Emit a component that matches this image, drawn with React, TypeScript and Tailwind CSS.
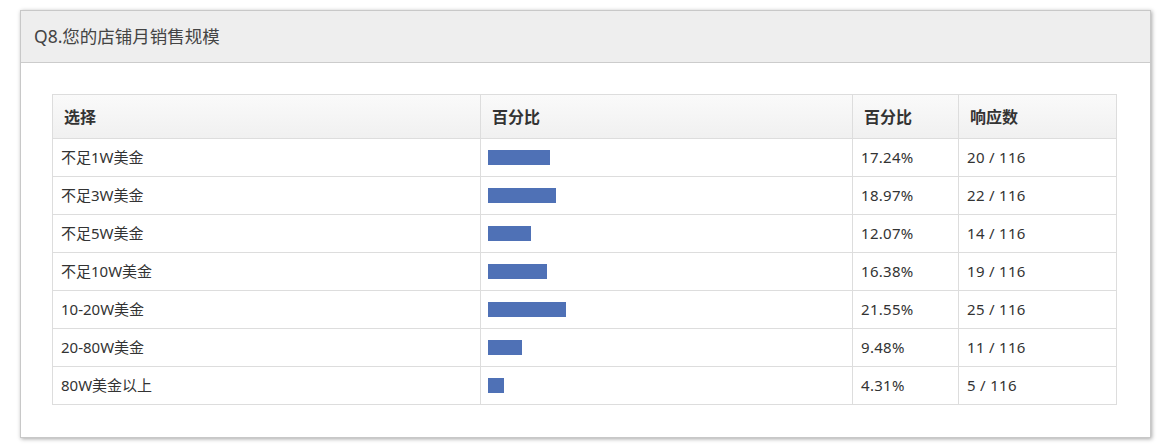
import React from 'react';

const rows = [
    { label: '不足1W美金', pct: 17.24, count: 20 },
    { label: '不足3W美金', pct: 18.97, count: 22 },
    { label: '不足5W美金', pct: 12.07, count: 14 },
    { label: '不足10W美金', pct: 16.38, count: 19 },
    { label: '10-20W美金', pct: 21.55, count: 25 },
    { label: '20-80W美金', pct: 9.48, count: 11 },
    { label: '80W美金以上', pct: 4.31, count: 5 },
];

export default function App() {
    return (
        <div
            className="w-[1167px] h-[447px] bg-white pt-[10px] pl-[20px] text-[#333]"
            style={{ fontFamily: '"Noto Sans", "Noto Sans CJK SC", sans-serif' }}
        >
            <div className="w-[1131px] bg-white border border-[#c8c8c8] shadow-[1px_1px_4px_rgba(0,0,0,0.35)]">
                {/* Question title */}
                <div className="h-[52px] bg-[#eeeeee] border-b border-[#cccccc] flex items-center pl-[13px] text-[17.5px] text-[#444]">
                    Q8.您的店铺月销售规模
                </div>

                <div className="pt-[31px] pb-[32px] pl-[31px] pr-[33px]">
                    <table className="w-full border-collapse text-[15px] table-fixed">
                        <colgroup>
                            <col className="w-[428px]" />
                            <col className="w-[372px]" />
                            <col className="w-[106px]" />
                            <col />
                        </colgroup>
                        <thead>
                            <tr className="h-[44px] bg-gradient-to-b from-[#fafafa] to-[#f0f0f0] text-[16px]">
                                <th className="border border-[#dddddd] text-left font-bold px-[11px]">选择</th>
                                <th className="border border-[#dddddd] text-left font-bold px-[11px]">百分比</th>
                                <th className="border border-[#dddddd] text-left font-bold px-[11px]">百分比</th>
                                <th className="border border-[#dddddd] text-left font-bold px-[11px]">响应数</th>
                            </tr>
                        </thead>
                        <tbody>
                            {rows.map((r) => (
                                <tr key={r.label} className="h-[38px]">
                                    <td className="border border-[#dddddd] px-[8px]">{r.label}</td>
                                    <td className="border border-[#dddddd] pl-[7px] pr-[8px]">
                                        <div className="h-[15px] bg-[#4f71b6]" style={{ width: `${Math.round(r.pct * 3.6)}px` }} />
                                    </td>
                                    <td className="border border-[#dddddd] px-[8px] tracking-[0.3px]">{r.pct.toFixed(2)}%</td>
                                    <td className="border border-[#dddddd] px-[8px] tracking-[0.3px]">{r.count} / 116</td>
                                </tr>
                            ))}
                        </tbody>
                    </table>
                </div>
            </div>
        </div>
    );
}
